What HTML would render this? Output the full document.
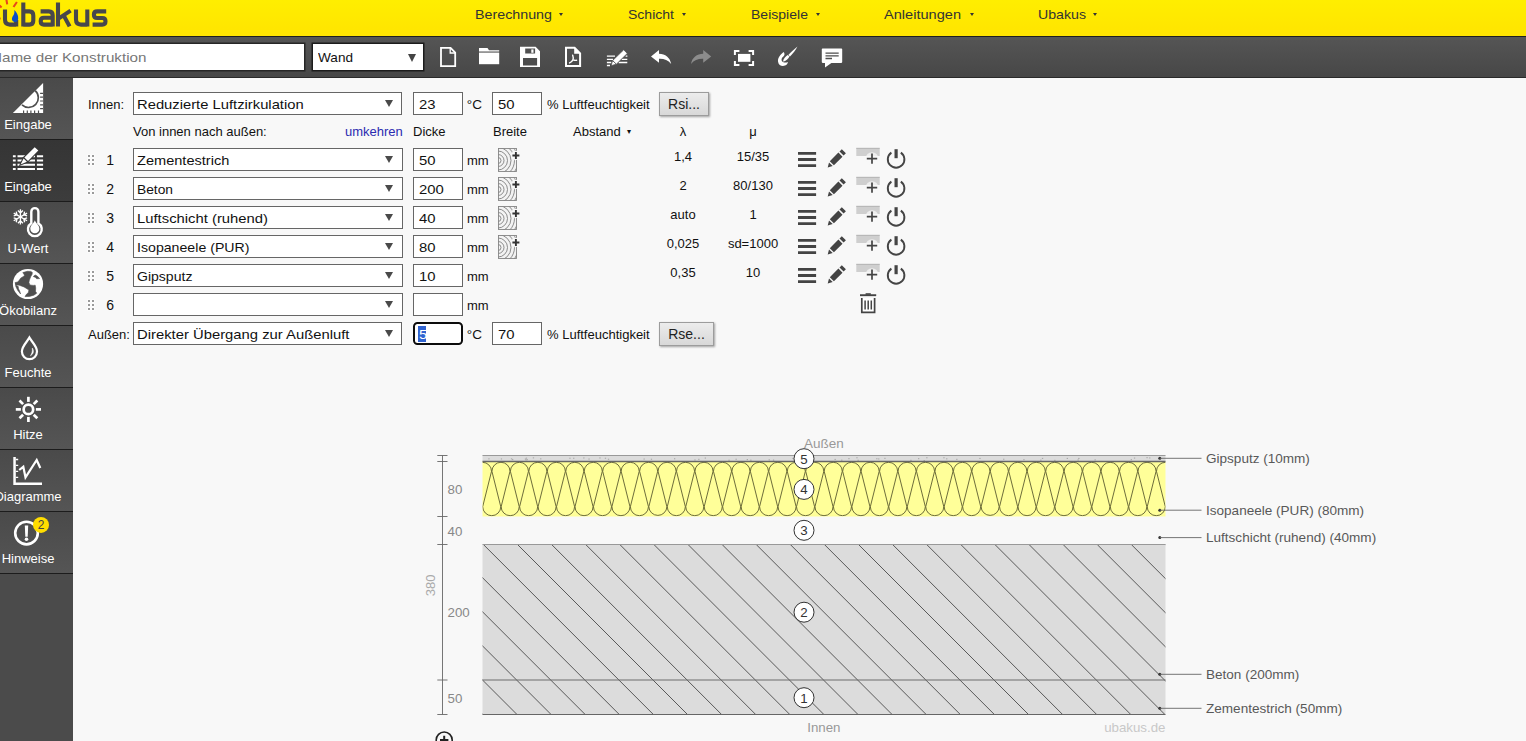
<!DOCTYPE html><html><head><meta charset="utf-8"><title>ubakus</title><style>
*{box-sizing:border-box;margin:0;padding:0}
html,body{width:1526px;height:741px;overflow:hidden;background:#f8f8f8;font-family:"Liberation Sans",sans-serif;}
.abs{position:absolute}
#hdr{position:absolute;left:0;top:0;width:1526px;height:36px;background:linear-gradient(#ffee00,#ffe400);}
#tb{position:absolute;left:0;top:36px;width:1526px;height:42px;background:linear-gradient(#555555,#474747);border-top:1px solid #1e1e1e;border-bottom:1px solid #2a2a2a;}
#sb{position:absolute;left:0;top:78px;width:73px;height:663px;background:#4b4b4b;}
.nav{position:absolute;top:6.6px;font-size:13.5px;color:#333;white-space:nowrap;line-height:16px;}
.nav i{font-style:normal;font-size:8px;position:relative;top:-2px;margin-left:5px}
.sbi{position:absolute;left:0;width:73px;height:62px;border-bottom:1px solid #1c1c1c;background:linear-gradient(#4a4a4a,#555555);}
.sbi.sel{background:linear-gradient(#353535,#3c3c3c)}
.sbl{position:absolute;left:-22px;width:100px;text-align:center;top:39px;font-size:13px;line-height:16px;color:#fff;white-space:nowrap}
.t{position:absolute;font-size:13px;line-height:15px;color:#111;white-space:nowrap}
.v{position:absolute;font-size:13px;line-height:15px;color:#222;white-space:nowrap;width:80px;text-align:center}
.sel{ }
.box{position:absolute;background:#fff;border:1px solid #555;height:23px;}
.box span{position:absolute;left:4px;top:3px;font-size:14px;line-height:16px;color:#111;white-space:nowrap}
.arr{position:absolute;width:0;height:0;border-left:4.2px solid transparent;border-right:4.2px solid transparent;border-top:7.6px solid #4a4a4a;}
.btn{position:absolute;height:23.6px;border:1px solid #9c9c9c;background:linear-gradient(#ececec,#d8d8d8);box-shadow:0.5px 1px 2px rgba(0,0,0,.35);font-size:14px;line-height:22.3px;text-align:center;color:#222;}
</style></head><body>
<div id="hdr">
<svg class="abs" style="left:0;top:0" width="112" height="36" viewBox="0 0 112 36">
<g fill="none" stroke="#47474c" stroke-width="4.1" stroke-linejoin="round">
<path d="M5,9.5 V19.6 Q5,24.6 10,24.6 H16.2 M16.2,20 V26.5"/>
<path d="M23.3,2.4 V26.5 M23.3,11.4 H29.4 Q33.3,11.4 33.3,15.6 V20.4 Q33.3,24.6 29.4,24.6 H23.3"/>
<path d="M40.6,11.4 H48.8 Q52.7,11.4 52.7,15.4 V26.5 M52.7,17.8 H44 Q40.7,17.8 40.7,21.2 Q40.7,24.6 44,24.6 H52.7"/>
<path d="M58,2.4 V26.5 M58.5,18.6 L70.6,10.6 M63.8,15.6 L69.6,26.4"/>
<path d="M76,9.5 V19.6 Q76,24.6 81,24.6 H87.3 M87.3,9.5 V26.5"/>
<path d="M106.2,11.4 H97.2 Q93.9,11.4 93.9,14.7 Q93.9,18 97.2,18 H102.2 Q105.5,18 105.5,21.3 Q105.5,24.6 102.2,24.6 H92.6"/>
</g>
<path d="M14.2,10 C16.8,12.4 18.4,15.2 18.2,18.4 C18,21.2 16.2,22.2 14.6,22 C12.6,21.8 11.6,20 12,18.2 C12.4,16 15.2,14.4 14.2,10 Z" fill="#0b4fc6"/>
<g stroke="#e8481c" stroke-width="2.1"><path d="M6.4,-0.5 L7.2,4.3 M16.9,2 L13.5,7 M-0.5,5.6 L1.6,7.5 M-0.5,18.6 L0.6,18.3"/></g>
</svg>
<div class="nav" style="left:475px;transform:scaleX(1.0575);transform-origin:0 0">Berechnung</div><div class="abs" style="left:559px;top:13.2px;width:0;height:0;border-left:2.7px solid transparent;border-right:2.7px solid transparent;border-top:3.6px solid #333"></div>
<div class="nav" style="left:628px;transform:scaleX(1.0388);transform-origin:0 0">Schicht</div><div class="abs" style="left:682px;top:13.2px;width:0;height:0;border-left:2.7px solid transparent;border-right:2.7px solid transparent;border-top:3.6px solid #333"></div>
<div class="nav" style="left:751px;transform:scaleX(1.0401);transform-origin:0 0">Beispiele</div><div class="abs" style="left:816px;top:13.2px;width:0;height:0;border-left:2.7px solid transparent;border-right:2.7px solid transparent;border-top:3.6px solid #333"></div>
<div class="nav" style="left:884px;transform:scaleX(1.0798);transform-origin:0 0">Anleitungen</div><div class="abs" style="left:969.5px;top:13.2px;width:0;height:0;border-left:2.7px solid transparent;border-right:2.7px solid transparent;border-top:3.6px solid #333"></div>
<div class="nav" style="left:1038px;transform:scaleX(1.0485);transform-origin:0 0">Ubakus</div><div class="abs" style="left:1093px;top:13.2px;width:0;height:0;border-left:2.7px solid transparent;border-right:2.7px solid transparent;border-top:3.6px solid #333"></div>
</div>
<div id="tb"></div>
<div class="abs" style="left:-6px;top:44px;width:310px;height:26px;background:#fff;box-shadow:0 0 0 1.5px #262626"><span class="abs" style="left:-3.3px;top:5.6px;font-size:13.5px;line-height:16px;transform:scaleX(1.1262);transform-origin:0 0;color:#777;white-space:nowrap">Name der Konstruktion</span></div>
<div class="abs" style="left:313px;top:44px;width:110px;height:26px;background:#fff;box-shadow:0 0 0 1.5px #1c1c1c"><span class="abs" style="left:4.5px;top:5.6px;font-size:13.5px;line-height:16px;color:#111;transform:scaleX(1.007);transform-origin:0 0">Wand</span><div class="arr" style="left:94.5px;top:9.5px;border-left-width:4.5px;border-right-width:4.5px;border-top-width:8px;border-top-color:#444"></div></div>
<div id="sb"></div>
<div class="sbi" style="top:78px"><div class="sbl">Eingabe</div></div>
<div class="sbi sel" style="top:140px"><div class="sbl">Eingabe</div></div>
<div class="sbi" style="top:202px"><div class="sbl">U-Wert</div></div>
<div class="sbi" style="top:264px"><div class="sbl">Ökobilanz</div></div>
<div class="sbi" style="top:326px"><div class="sbl">Feuchte</div></div>
<div class="sbi" style="top:388px"><div class="sbl">Hitze</div></div>
<div class="sbi" style="top:450px"><div class="sbl">Diagramme</div></div>
<div class="sbi" style="top:512px"><div class="sbl">Hinweise</div></div>
<div class="t" style="left:88px;top:96.70px;font-size:13px;color:#111;">Innen:</div>
<div class="box" style="left:133px;top:92px;width:269px;height:23px;border-color:#666"><span style="left:3.3px;top:3.82px;font-size:13.5px;transform:scaleX(1.0942);transform-origin:0 0">Reduzierte Luftzirkulation</span><div class="arr" style="left:251px;top:7.4px"></div></div>
<div class="box" style="left:413px;top:92px;width:50px;height:23px;border-color:#666"><span style="left:5px;top:4.12px;font-size:13.5px;transform:scaleX(1.1);transform-origin:0 0">23</span></div>
<div class="t" style="left:466.8px;top:96.82px;font-size:13.5px;color:#111;">°C</div>
<div class="box" style="left:492px;top:92px;width:50px;height:23px;border-color:#666"><span style="left:5px;top:4.12px;font-size:13.5px;transform:scaleX(1.1);transform-origin:0 0">50</span></div>
<div class="t" style="left:547px;top:96.70px;font-size:13px;color:#111;">% Luftfeuchtigkeit</div>
<div class="btn" style="left:659px;top:92px;width:50px">Rsi...</div>
<div class="t" style="left:133px;top:123.70px;font-size:13px;color:#111;">Von innen nach außen:</div>
<div class="t" style="left:345px;top:123.70px;font-size:13px;color:#2b2bb0;">umkehren</div>
<div class="t" style="left:413px;top:123.70px;font-size:13px;color:#111;">Dicke</div>
<div class="t" style="left:493px;top:123.70px;font-size:13px;color:#111;">Breite</div>
<div class="t" style="left:573px;top:123.70px;font-size:13px;color:#111;">Abstand <span style="font-size:8px;position:relative;top:-2px;margin-left:3px">&#9662;</span></div>
<div class="v" style="left:643px;top:123.70px;font-size:13px;color:#111;">λ</div>
<div class="v" style="left:713px;top:123.70px;font-size:13px;color:#111;">μ</div>
<svg class="abs" style="left:87.1px;top:154.1px" width="8" height="12" viewBox="0 0 8 12"><rect x="0.4" y="0.4" width="3.2" height="3.2" fill="#fff"/><rect x="1" y="1" width="2" height="2" fill="#9a9a9a"/><rect x="0.4" y="4.4" width="3.2" height="3.2" fill="#fff"/><rect x="1" y="5" width="2" height="2" fill="#9a9a9a"/><rect x="0.4" y="8.4" width="3.2" height="3.2" fill="#fff"/><rect x="1" y="9" width="2" height="2" fill="#9a9a9a"/><rect x="4.4" y="0.4" width="3.2" height="3.2" fill="#fff"/><rect x="5" y="1" width="2" height="2" fill="#9a9a9a"/><rect x="4.4" y="4.4" width="3.2" height="3.2" fill="#fff"/><rect x="5" y="5" width="2" height="2" fill="#9a9a9a"/><rect x="4.4" y="8.4" width="3.2" height="3.2" fill="#fff"/><rect x="5" y="9" width="2" height="2" fill="#9a9a9a"/></svg>
<div class="t" style="left:106.2px;top:152.65px;font-size:14px;color:#111;">1</div>
<div class="box" style="left:133px;top:148px;width:270px;height:23px;border-color:#666"><span style="left:3.3px;top:3.82px;font-size:13.5px;transform:scaleX(1.0791);transform-origin:0 0">Zementestrich</span><div class="arr" style="left:251px;top:7.4px"></div></div>
<div class="box" style="left:413px;top:148px;width:50px;height:23px;border-color:#666"><span style="left:5px;top:4.12px;font-size:13.5px;transform:scaleX(1.1);transform-origin:0 0">50</span></div>
<div class="t" style="left:467px;top:152.70px;font-size:13px;color:#111;">mm</div>
<!--WOOD 148-->
<div class="v" style="left:643px;top:149.00px;font-size:13px;color:#111;">1,4</div>
<div class="v" style="left:713px;top:149.00px;font-size:13px;color:#111;">15/35</div>
<!--ROWICONS 148-->
<svg class="abs" style="left:87.1px;top:183.1px" width="8" height="12" viewBox="0 0 8 12"><rect x="0.4" y="0.4" width="3.2" height="3.2" fill="#fff"/><rect x="1" y="1" width="2" height="2" fill="#9a9a9a"/><rect x="0.4" y="4.4" width="3.2" height="3.2" fill="#fff"/><rect x="1" y="5" width="2" height="2" fill="#9a9a9a"/><rect x="0.4" y="8.4" width="3.2" height="3.2" fill="#fff"/><rect x="1" y="9" width="2" height="2" fill="#9a9a9a"/><rect x="4.4" y="0.4" width="3.2" height="3.2" fill="#fff"/><rect x="5" y="1" width="2" height="2" fill="#9a9a9a"/><rect x="4.4" y="4.4" width="3.2" height="3.2" fill="#fff"/><rect x="5" y="5" width="2" height="2" fill="#9a9a9a"/><rect x="4.4" y="8.4" width="3.2" height="3.2" fill="#fff"/><rect x="5" y="9" width="2" height="2" fill="#9a9a9a"/></svg>
<div class="t" style="left:106.2px;top:181.65px;font-size:14px;color:#111;">2</div>
<div class="box" style="left:133px;top:177px;width:270px;height:23px;border-color:#666"><span style="left:3.3px;top:3.82px;font-size:13.5px;transform:scaleX(1.0204);transform-origin:0 0">Beton</span><div class="arr" style="left:251px;top:7.4px"></div></div>
<div class="box" style="left:413px;top:177px;width:50px;height:23px;border-color:#666"><span style="left:5px;top:4.12px;font-size:13.5px;transform:scaleX(1.1);transform-origin:0 0">200</span></div>
<div class="t" style="left:467px;top:181.70px;font-size:13px;color:#111;">mm</div>
<!--WOOD 177-->
<div class="v" style="left:643px;top:178.00px;font-size:13px;color:#111;">2</div>
<div class="v" style="left:713px;top:178.00px;font-size:13px;color:#111;">80/130</div>
<!--ROWICONS 177-->
<svg class="abs" style="left:87.1px;top:212.1px" width="8" height="12" viewBox="0 0 8 12"><rect x="0.4" y="0.4" width="3.2" height="3.2" fill="#fff"/><rect x="1" y="1" width="2" height="2" fill="#9a9a9a"/><rect x="0.4" y="4.4" width="3.2" height="3.2" fill="#fff"/><rect x="1" y="5" width="2" height="2" fill="#9a9a9a"/><rect x="0.4" y="8.4" width="3.2" height="3.2" fill="#fff"/><rect x="1" y="9" width="2" height="2" fill="#9a9a9a"/><rect x="4.4" y="0.4" width="3.2" height="3.2" fill="#fff"/><rect x="5" y="1" width="2" height="2" fill="#9a9a9a"/><rect x="4.4" y="4.4" width="3.2" height="3.2" fill="#fff"/><rect x="5" y="5" width="2" height="2" fill="#9a9a9a"/><rect x="4.4" y="8.4" width="3.2" height="3.2" fill="#fff"/><rect x="5" y="9" width="2" height="2" fill="#9a9a9a"/></svg>
<div class="t" style="left:106.2px;top:210.65px;font-size:14px;color:#111;">3</div>
<div class="box" style="left:133px;top:206px;width:270px;height:23px;border-color:#666"><span style="left:3.3px;top:3.82px;font-size:13.5px;transform:scaleX(1.0980);transform-origin:0 0">Luftschicht (ruhend)</span><div class="arr" style="left:251px;top:7.4px"></div></div>
<div class="box" style="left:413px;top:206px;width:50px;height:23px;border-color:#666"><span style="left:5px;top:4.12px;font-size:13.5px;transform:scaleX(1.1);transform-origin:0 0">40</span></div>
<div class="t" style="left:467px;top:210.70px;font-size:13px;color:#111;">mm</div>
<!--WOOD 206-->
<div class="v" style="left:643px;top:207.00px;font-size:13px;color:#111;">auto</div>
<div class="v" style="left:713px;top:207.00px;font-size:13px;color:#111;">1</div>
<!--ROWICONS 206-->
<svg class="abs" style="left:87.1px;top:241.1px" width="8" height="12" viewBox="0 0 8 12"><rect x="0.4" y="0.4" width="3.2" height="3.2" fill="#fff"/><rect x="1" y="1" width="2" height="2" fill="#9a9a9a"/><rect x="0.4" y="4.4" width="3.2" height="3.2" fill="#fff"/><rect x="1" y="5" width="2" height="2" fill="#9a9a9a"/><rect x="0.4" y="8.4" width="3.2" height="3.2" fill="#fff"/><rect x="1" y="9" width="2" height="2" fill="#9a9a9a"/><rect x="4.4" y="0.4" width="3.2" height="3.2" fill="#fff"/><rect x="5" y="1" width="2" height="2" fill="#9a9a9a"/><rect x="4.4" y="4.4" width="3.2" height="3.2" fill="#fff"/><rect x="5" y="5" width="2" height="2" fill="#9a9a9a"/><rect x="4.4" y="8.4" width="3.2" height="3.2" fill="#fff"/><rect x="5" y="9" width="2" height="2" fill="#9a9a9a"/></svg>
<div class="t" style="left:106.2px;top:239.65px;font-size:14px;color:#111;">4</div>
<div class="box" style="left:133px;top:235px;width:270px;height:23px;border-color:#666"><span style="left:3.3px;top:3.82px;font-size:13.5px;transform:scaleX(1.0483);transform-origin:0 0">Isopaneele (PUR)</span><div class="arr" style="left:251px;top:7.4px"></div></div>
<div class="box" style="left:413px;top:235px;width:50px;height:23px;border-color:#666"><span style="left:5px;top:4.12px;font-size:13.5px;transform:scaleX(1.1);transform-origin:0 0">80</span></div>
<div class="t" style="left:467px;top:239.70px;font-size:13px;color:#111;">mm</div>
<!--WOOD 235-->
<div class="v" style="left:643px;top:236.00px;font-size:13px;color:#111;">0,025</div>
<div class="v" style="left:713px;top:236.00px;font-size:13px;color:#111;">sd=1000</div>
<!--ROWICONS 235-->
<svg class="abs" style="left:87.1px;top:270.1px" width="8" height="12" viewBox="0 0 8 12"><rect x="0.4" y="0.4" width="3.2" height="3.2" fill="#fff"/><rect x="1" y="1" width="2" height="2" fill="#9a9a9a"/><rect x="0.4" y="4.4" width="3.2" height="3.2" fill="#fff"/><rect x="1" y="5" width="2" height="2" fill="#9a9a9a"/><rect x="0.4" y="8.4" width="3.2" height="3.2" fill="#fff"/><rect x="1" y="9" width="2" height="2" fill="#9a9a9a"/><rect x="4.4" y="0.4" width="3.2" height="3.2" fill="#fff"/><rect x="5" y="1" width="2" height="2" fill="#9a9a9a"/><rect x="4.4" y="4.4" width="3.2" height="3.2" fill="#fff"/><rect x="5" y="5" width="2" height="2" fill="#9a9a9a"/><rect x="4.4" y="8.4" width="3.2" height="3.2" fill="#fff"/><rect x="5" y="9" width="2" height="2" fill="#9a9a9a"/></svg>
<div class="t" style="left:106.2px;top:268.65px;font-size:14px;color:#111;">5</div>
<div class="box" style="left:133px;top:264px;width:270px;height:23px;border-color:#666"><span style="left:3.3px;top:3.82px;font-size:13.5px;transform:scaleX(1.0398);transform-origin:0 0">Gipsputz</span><div class="arr" style="left:251px;top:7.4px"></div></div>
<div class="box" style="left:413px;top:264px;width:50px;height:23px;border-color:#666"><span style="left:5px;top:4.12px;font-size:13.5px;transform:scaleX(1.1);transform-origin:0 0">10</span></div>
<div class="t" style="left:467px;top:268.70px;font-size:13px;color:#111;">mm</div>
<div class="v" style="left:643px;top:265.00px;font-size:13px;color:#111;">0,35</div>
<div class="v" style="left:713px;top:265.00px;font-size:13px;color:#111;">10</div>
<!--ROWICONS 264-->
<svg class="abs" style="left:87.1px;top:299.1px" width="8" height="12" viewBox="0 0 8 12"><rect x="0.4" y="0.4" width="3.2" height="3.2" fill="#fff"/><rect x="1" y="1" width="2" height="2" fill="#9a9a9a"/><rect x="0.4" y="4.4" width="3.2" height="3.2" fill="#fff"/><rect x="1" y="5" width="2" height="2" fill="#9a9a9a"/><rect x="0.4" y="8.4" width="3.2" height="3.2" fill="#fff"/><rect x="1" y="9" width="2" height="2" fill="#9a9a9a"/><rect x="4.4" y="0.4" width="3.2" height="3.2" fill="#fff"/><rect x="5" y="1" width="2" height="2" fill="#9a9a9a"/><rect x="4.4" y="4.4" width="3.2" height="3.2" fill="#fff"/><rect x="5" y="5" width="2" height="2" fill="#9a9a9a"/><rect x="4.4" y="8.4" width="3.2" height="3.2" fill="#fff"/><rect x="5" y="9" width="2" height="2" fill="#9a9a9a"/></svg>
<div class="t" style="left:106.2px;top:297.65px;font-size:14px;color:#111;">6</div>
<div class="box" style="left:133px;top:293px;width:270px;height:23px;border-color:#666"><span style="left:3.3px;top:3.82px;font-size:13.5px;transform:scaleX(1.0000);transform-origin:0 0"></span><div class="arr" style="left:251px;top:7.4px"></div></div>
<div class="box" style="left:413px;top:293px;width:50px;height:23px;border-color:#666"><span style="left:5px;top:4.12px;font-size:13.5px;transform:scaleX(1.1);transform-origin:0 0"></span></div>
<div class="t" style="left:467px;top:297.70px;font-size:13px;color:#111;">mm</div>
<!--TRASH 293-->
<div class="t" style="left:88px;top:326.70px;font-size:13px;color:#111;">Außen:</div>
<div class="box" style="left:133px;top:322px;width:269px;height:23px;border-color:#666"><span style="left:3.3px;top:3.82px;font-size:13.5px;transform:scaleX(1.0976);transform-origin:0 0">Direkter Übergang zur Außenluft</span><div class="arr" style="left:251px;top:7.4px"></div></div>
<div class="abs" style="left:413px;top:322px;width:50px;height:23px;background:#fff;border:2px solid #0c0c0c;border-radius:4.5px"><div class="abs" style="left:3px;top:2.2px;width:8.1px;height:15.6px;background:#3063d0"></div><span class="abs" style="left:4px;top:3.12px;font-size:13.5px;line-height:16px;color:#fff;transform:scaleX(1.1);transform-origin:0 0">5</span></div>
<div class="t" style="left:466.8px;top:326.82px;font-size:13.5px;color:#111;">°C</div>
<div class="box" style="left:492px;top:322px;width:50px;height:23px;border-color:#666"><span style="left:5px;top:4.12px;font-size:13.5px;transform:scaleX(1.1);transform-origin:0 0">70</span></div>
<div class="t" style="left:547px;top:326.70px;font-size:13px;color:#111;">% Luftfeuchtigkeit</div>
<div class="btn" style="left:659px;top:322px;width:55px">Rse...</div>
<svg class="abs" style="left:430px;top:40px" width="430" height="36" viewBox="430 40 430 36"><path d="M441,47.9 H450.6 L455.2,52.5 V66.2 H441 Z" fill="none" stroke="#fff" stroke-width="1.8"/><path d="M450.2,48 V53 H455" fill="none" stroke="#fff" stroke-width="1.3"/><path d="M479,48 H487.5 L489,50.2 H499.2 V51.6 H479 Z" fill="#fff"/><rect x="479" y="52.6" width="20.2" height="11.6" fill="#fff"/><path fill-rule="evenodd" d="M520,46.8 H535.6 L540,51.2 V67.1 H520 Z M525.2,48.4 V53.6 H535.1 V48.4 Z M523,57.9 V65.4 H537.1 V57.9 Z" fill="#fff"/><rect x="531.3" y="49.4" width="2.2" height="3.4" fill="#fff"/><path d="M566,47.8 H574.6 L580.1,53.3 V66.1 H566 Z" fill="none" stroke="#fff" stroke-width="2"/><path d="M574.2,47.6 L580.4,53.8 H574.2 Z" fill="#fff"/><path d="M572.7,55.2 C573.4,57 573.2,58.8 572.9,59.8 M572.9,59.8 C572,61.4 570.8,62.4 569.6,62.9 M572.9,59.8 C574,60.2 575.4,60.4 576.6,60.3" fill="none" stroke="#fff" stroke-width="1.4" stroke-linecap="round"/><g stroke="#fff" stroke-width="1.3"><path d="M606.9,56.2 H615 M606.9,59.3 H613 M606.9,62.5 H611.4 M606.9,65.5 H610 M625.6,56.2 H627.4 M621.6,59.3 H627.3 M618.6,62.5 H627.3"/></g><path d="M623.7,49.8 L627.3,53.4 L616.4,64.2 L611,65.7 L612.6,60.6 Z" fill="#fff" stroke="#4e4e4e" stroke-width="0.8"/><path d="M612.6,60.6 L616.4,64.2" stroke="#4e4e4e" stroke-width="0.9"/><path d="M659,50 L651,56.6 L659,62.8 V58.8 C664,58.6 668,60 671.2,64 C670,57.4 665.4,54 659,53.8 Z" fill="#fff"/><g transform="translate(1362.2,0) scale(-1,1)"><path d="M659,50 L651,56.6 L659,62.8 V58.8 C664,58.6 668,60 671.2,64 C670,57.4 665.4,54 659,53.8 Z" fill="#8c8c8c"/></g><path d="M734.9,55 V51.1 H739.4 M748.6,51.1 H753.1 V55 M753.1,61 V64.9 H748.6 M739.4,64.9 H734.9 V61" fill="none" stroke="#fff" stroke-width="2"/><rect x="738" y="53.9" width="12.4" height="7.9" fill="#fff"/><path d="M797.5,46.5 C794.6,48.6 790.4,52.6 788.3,55 L790,56.5 C792.6,53.8 796,49.6 797.5,46.5 Z" fill="#fff"/><path d="M789.5,56.6 L787.7,55 C785.6,56.4 783.3,58.8 783,61.4 C785.6,61.6 788.2,59.2 789.5,56.6 Z" fill="#fff"/><path d="M783.8,52 C781,54 777.6,57.6 778,61.4 C778.4,65.2 782,66.8 785,65.6 C786.8,64.8 787.9,63.4 787.9,62 C786,62.8 783.2,62.8 782,61.2 C781,59.6 781.6,57.6 783.4,56.4 C784.8,55.4 784.8,53.6 783.8,52 Z" fill="#fff"/><path d="M822.6,48.5 H841.4 Q842.2,48.5 842.2,49.3 V62.1 Q842.2,62.9 841.4,62.9 H831.4 L825,67.4 V62.9 H822.6 Q821.8,62.9 821.8,62.1 V49.3 Q821.8,48.5 822.6,48.5 Z" fill="#fff"/><path d="M825.5,53.1 H838.7 M825.5,55.8 H838.7 M825.5,58.5 H832" stroke="#4e4e4e" stroke-width="1.3"/></svg>
<svg class="abs" style="left:0;top:78px" width="73" height="500" viewBox="0 78 73 500"><path d="M12.9,113.1 H43.1 V82.9 Z" fill="#fff"/><path d="M35.2,90.6 A9.7,9.7 0 0 1 22,104.9" fill="none" stroke="#4f4f4f" stroke-width="1.7"/><path d="M23.6,110.4 V113.1 M27.3,110.4 V113.1 M30.9,110.4 V113.1 M34.6,110.4 V113.1 M38.5,110.4 V113.1 M40.1,93.4 H43.1 M40.1,97.2 H43.1 M40.1,101 H43.1 M40.1,104.8 H43.1 M40.1,108.6 H43.1 " stroke="#4f4f4f" stroke-width="1.2"/><path d="M12.9,156.3 H15.7 M17.5,156.3 H35 M36.9,156.3 H43.1 M12.9,160.5 H15.7 M17.5,160.5 H35 M36.9,160.5 H43.1 M12.9,164.75 H15.7 M17.5,164.75 H35 M36.9,164.75 H43.1 M12.9,169 H15.7 M17.5,169 H35 M36.9,169 H43.1 " stroke="#fff" stroke-width="2.1"/><path d="M34.7,145.8 L39.7,150.6 L28,162.4 L18.8,166.2 L22.9,157.2 Z" fill="#383838"/><path d="M34.7,147.2 L38.3,150.6 L28,161 L24.4,157.5 Z M23.6,158.5 L26.9,161.8 L20.6,164.4 Z" fill="#fff"/><g stroke="#fff" stroke-width="1.35" fill="none"><g transform="rotate(0 20.4 216.9)"><path d="M20.4,216.9 V209.2 M20.4,213 L17.9,210.6 M20.4,213 L22.9,210.6" /></g><g transform="rotate(60 20.4 216.9)"><path d="M20.4,216.9 V209.2 M20.4,213 L17.9,210.6 M20.4,213 L22.9,210.6" /></g><g transform="rotate(120 20.4 216.9)"><path d="M20.4,216.9 V209.2 M20.4,213 L17.9,210.6 M20.4,213 L22.9,210.6" /></g><g transform="rotate(180 20.4 216.9)"><path d="M20.4,216.9 V209.2 M20.4,213 L17.9,210.6 M20.4,213 L22.9,210.6" /></g><g transform="rotate(240 20.4 216.9)"><path d="M20.4,216.9 V209.2 M20.4,213 L17.9,210.6 M20.4,213 L22.9,210.6" /></g><g transform="rotate(300 20.4 216.9)"><path d="M20.4,216.9 V209.2 M20.4,213 L17.9,210.6 M20.4,213 L22.9,210.6" /></g></g><path d="M31.3,223.3 V211.7 A3.55,3.55 0 0 1 38.4,211.7 V223.3 A6.9,6.9 0 1 1 31.3,223.3 Z" fill="none" stroke="#fff" stroke-width="2.4"/><path d="M34.85,220.2 C35.6,223 39.4,225 39.4,228.8 A4.55,4.55 0 0 1 30.3,228.8 C30.3,225 34.1,223 34.85,220.2 Z" fill="#fff"/><circle cx="28" cy="284" r="15.1" fill="#fff"/><path d="M22.8,272.6 L27.4,271.3 L30.8,271.4 L32.3,272.4 L32.1,274.3 L30.8,276.5 L29.4,280.1 L28.9,282.5 L29.9,285.0 L33.3,285.4 L35.2,285.2 L35.7,287.9 L35.5,291.3 L36.7,293.2 L33.8,295.2 L29.4,296.4 L25.0,296.6 L26.5,294.2 L28.4,292.5 L28.9,290.1 L27.0,288.8 L24.0,286.9 L20.6,285.7 L19.2,285.2 L15.8,284.7 L15.3,282.5 L17.7,282.0 L19.4,280.1 L20.6,278.2 L22.6,276.9 L24.5,275.7 L24.0,274.3 Z M15.3,282.8 L15.8,286.4 L17.7,290.3 L20.6,294.0 L19.7,291.3 L18.5,288.8 L18.2,286.4 L16.5,285.4 Z M33.3,276.5 L35.2,275.0 L37.2,276.0 L39.6,278.6 L36.7,278.7 L35.2,277.3 Z" fill="#4f4f4f" stroke="#4f4f4f" stroke-width="0.6" stroke-linejoin="round"/><path d="M29.4,337.6 C31.4,341.6 37,346 37,351.6 A7.55,7.55 0 0 1 21.9,351.6 C21.9,346 27.4,341.6 29.4,337.6 Z" fill="none" stroke="#fff" stroke-width="2.2" stroke-miterlimit="10"/><path d="M32.3,348 C34.4,351 33.4,354.4 30.4,355.7 C32,353.6 32.6,351 32.3,348 Z" fill="#fff" stroke="#fff" stroke-width="0.5"/><circle cx="28.4" cy="409.4" r="4.75" fill="none" stroke="#fff" stroke-width="2.7"/><g stroke="#fff" stroke-width="2.7"><path transform="rotate(0 28.4 409.4)" d="M28.4,401.9 V396.8"/><path transform="rotate(45 28.4 409.4)" d="M28.4,401.9 V396.8"/><path transform="rotate(90 28.4 409.4)" d="M28.4,401.9 V396.8"/><path transform="rotate(135 28.4 409.4)" d="M28.4,401.9 V396.8"/><path transform="rotate(180 28.4 409.4)" d="M28.4,401.9 V396.8"/><path transform="rotate(225 28.4 409.4)" d="M28.4,401.9 V396.8"/><path transform="rotate(270 28.4 409.4)" d="M28.4,401.9 V396.8"/><path transform="rotate(315 28.4 409.4)" d="M28.4,401.9 V396.8"/></g><path d="M14.55,456.9 V483.75 H42" fill="none" stroke="#fff" stroke-width="2.5"/><path d="M15.8,459.5 H18.2 M15.8,465.4 H18.2 M15.8,471.4 H18.2 M15.8,477.4 H18.2" stroke="#fff" stroke-width="1.4"/><path d="M19.2,470 L23.3,466.8 L25.5,477.3 L36.7,460 L40.3,468" fill="none" stroke="#fff" stroke-width="2.2" stroke-linejoin="miter"/><circle cx="26.5" cy="533.05" r="11.3" fill="none" stroke="#fff" stroke-width="2.6"/><path d="M24.8,525.4 H28.2 L27.7,536.8 H25.3 Z" fill="#fff"/><circle cx="26.5" cy="539.3" r="1.8" fill="#fff"/><circle cx="41" cy="524.9" r="8" fill="#ffdd00"/><text x="41.2" y="528.9" font-size="12" fill="#444" text-anchor="middle" font-family="Liberation Sans, sans-serif">2</text></svg>
<svg class="abs" style="left:490px;top:140px" width="430" height="180" viewBox="490 140 430 180"><g transform="translate(0,0)"><path d="M798,153.4 H816.1 M798,159.5 H816.1 M798,165.6 H816.1" stroke="#444" stroke-width="2.9"/><path d="M841.8,149.2 L845.9,153.3 L843.6,155.6 L839.5,151.5 Z M838.4,152.6 L842.5,156.7 L833.9,165.3 L829.8,161.2 Z M829,162.4 L832.7,166.1 L827.7,167.4 Z" fill="#444"/><rect x="856.3" y="148" width="23.4" height="8" fill="#cfcfcf"/><path d="M856.3,148.3 H879.7" stroke="#aaa" stroke-width="0.8"/><circle cx="872" cy="158.6" r="6.4" fill="#f8f8f8" opacity="0.75"/><path d="M866.8,158.6 H877.2 M872,153.4 V163.8" stroke="#444" stroke-width="1.7"/><path d="M891.4,152.6 A8.3,8.3 0 1 0 900.8,152.6" fill="none" stroke="#444" stroke-width="1.9"/><path d="M896.1,149.2 V158.2" stroke="#444" stroke-width="3.2"/></g><g transform="translate(0,29)"><path d="M798,153.4 H816.1 M798,159.5 H816.1 M798,165.6 H816.1" stroke="#444" stroke-width="2.9"/><path d="M841.8,149.2 L845.9,153.3 L843.6,155.6 L839.5,151.5 Z M838.4,152.6 L842.5,156.7 L833.9,165.3 L829.8,161.2 Z M829,162.4 L832.7,166.1 L827.7,167.4 Z" fill="#444"/><rect x="856.3" y="148" width="23.4" height="8" fill="#cfcfcf"/><path d="M856.3,148.3 H879.7" stroke="#aaa" stroke-width="0.8"/><circle cx="872" cy="158.6" r="6.4" fill="#f8f8f8" opacity="0.75"/><path d="M866.8,158.6 H877.2 M872,153.4 V163.8" stroke="#444" stroke-width="1.7"/><path d="M891.4,152.6 A8.3,8.3 0 1 0 900.8,152.6" fill="none" stroke="#444" stroke-width="1.9"/><path d="M896.1,149.2 V158.2" stroke="#444" stroke-width="3.2"/></g><g transform="translate(0,58)"><path d="M798,153.4 H816.1 M798,159.5 H816.1 M798,165.6 H816.1" stroke="#444" stroke-width="2.9"/><path d="M841.8,149.2 L845.9,153.3 L843.6,155.6 L839.5,151.5 Z M838.4,152.6 L842.5,156.7 L833.9,165.3 L829.8,161.2 Z M829,162.4 L832.7,166.1 L827.7,167.4 Z" fill="#444"/><rect x="856.3" y="148" width="23.4" height="8" fill="#cfcfcf"/><path d="M856.3,148.3 H879.7" stroke="#aaa" stroke-width="0.8"/><circle cx="872" cy="158.6" r="6.4" fill="#f8f8f8" opacity="0.75"/><path d="M866.8,158.6 H877.2 M872,153.4 V163.8" stroke="#444" stroke-width="1.7"/><path d="M891.4,152.6 A8.3,8.3 0 1 0 900.8,152.6" fill="none" stroke="#444" stroke-width="1.9"/><path d="M896.1,149.2 V158.2" stroke="#444" stroke-width="3.2"/></g><g transform="translate(0,87)"><path d="M798,153.4 H816.1 M798,159.5 H816.1 M798,165.6 H816.1" stroke="#444" stroke-width="2.9"/><path d="M841.8,149.2 L845.9,153.3 L843.6,155.6 L839.5,151.5 Z M838.4,152.6 L842.5,156.7 L833.9,165.3 L829.8,161.2 Z M829,162.4 L832.7,166.1 L827.7,167.4 Z" fill="#444"/><rect x="856.3" y="148" width="23.4" height="8" fill="#cfcfcf"/><path d="M856.3,148.3 H879.7" stroke="#aaa" stroke-width="0.8"/><circle cx="872" cy="158.6" r="6.4" fill="#f8f8f8" opacity="0.75"/><path d="M866.8,158.6 H877.2 M872,153.4 V163.8" stroke="#444" stroke-width="1.7"/><path d="M891.4,152.6 A8.3,8.3 0 1 0 900.8,152.6" fill="none" stroke="#444" stroke-width="1.9"/><path d="M896.1,149.2 V158.2" stroke="#444" stroke-width="3.2"/></g><g transform="translate(0,116)"><path d="M798,153.4 H816.1 M798,159.5 H816.1 M798,165.6 H816.1" stroke="#444" stroke-width="2.9"/><path d="M841.8,149.2 L845.9,153.3 L843.6,155.6 L839.5,151.5 Z M838.4,152.6 L842.5,156.7 L833.9,165.3 L829.8,161.2 Z M829,162.4 L832.7,166.1 L827.7,167.4 Z" fill="#444"/><rect x="856.3" y="148" width="23.4" height="8" fill="#cfcfcf"/><path d="M856.3,148.3 H879.7" stroke="#aaa" stroke-width="0.8"/><circle cx="872" cy="158.6" r="6.4" fill="#f8f8f8" opacity="0.75"/><path d="M866.8,158.6 H877.2 M872,153.4 V163.8" stroke="#444" stroke-width="1.7"/><path d="M891.4,152.6 A8.3,8.3 0 1 0 900.8,152.6" fill="none" stroke="#444" stroke-width="1.9"/><path d="M896.1,149.2 V158.2" stroke="#444" stroke-width="3.2"/></g><g transform="translate(0,0)"><rect x="498.5" y="148.5" width="18" height="23" fill="#f3f3f3" stroke="#858585" stroke-width="0.9"/><clipPath id="wc0"><rect x="498.5" y="148.5" width="18" height="23"/></clipPath><g clip-path="url(#wc0)" fill="none" stroke="#808080" stroke-width="0.9"><circle cx="498" cy="160.5" r="3"/><circle cx="498" cy="160.5" r="6"/><circle cx="498" cy="160.5" r="9.5"/><circle cx="498" cy="160.5" r="13"/><circle cx="498" cy="160.5" r="16.5"/><circle cx="498" cy="160.5" r="20"/></g><circle cx="515.8" cy="155.4" r="4.7" fill="#f8f8f8"/><path d="M512.4,155.5 H519.4 M515.9,152 V159" stroke="#333" stroke-width="1.9"/></g><g transform="translate(0,29)"><rect x="498.5" y="148.5" width="18" height="23" fill="#f3f3f3" stroke="#858585" stroke-width="0.9"/><clipPath id="wc1"><rect x="498.5" y="148.5" width="18" height="23"/></clipPath><g clip-path="url(#wc1)" fill="none" stroke="#808080" stroke-width="0.9"><circle cx="498" cy="160.5" r="3"/><circle cx="498" cy="160.5" r="6"/><circle cx="498" cy="160.5" r="9.5"/><circle cx="498" cy="160.5" r="13"/><circle cx="498" cy="160.5" r="16.5"/><circle cx="498" cy="160.5" r="20"/></g><circle cx="515.8" cy="155.4" r="4.7" fill="#f8f8f8"/><path d="M512.4,155.5 H519.4 M515.9,152 V159" stroke="#333" stroke-width="1.9"/></g><g transform="translate(0,58)"><rect x="498.5" y="148.5" width="18" height="23" fill="#f3f3f3" stroke="#858585" stroke-width="0.9"/><clipPath id="wc2"><rect x="498.5" y="148.5" width="18" height="23"/></clipPath><g clip-path="url(#wc2)" fill="none" stroke="#808080" stroke-width="0.9"><circle cx="498" cy="160.5" r="3"/><circle cx="498" cy="160.5" r="6"/><circle cx="498" cy="160.5" r="9.5"/><circle cx="498" cy="160.5" r="13"/><circle cx="498" cy="160.5" r="16.5"/><circle cx="498" cy="160.5" r="20"/></g><circle cx="515.8" cy="155.4" r="4.7" fill="#f8f8f8"/><path d="M512.4,155.5 H519.4 M515.9,152 V159" stroke="#333" stroke-width="1.9"/></g><g transform="translate(0,87)"><rect x="498.5" y="148.5" width="18" height="23" fill="#f3f3f3" stroke="#858585" stroke-width="0.9"/><clipPath id="wc3"><rect x="498.5" y="148.5" width="18" height="23"/></clipPath><g clip-path="url(#wc3)" fill="none" stroke="#808080" stroke-width="0.9"><circle cx="498" cy="160.5" r="3"/><circle cx="498" cy="160.5" r="6"/><circle cx="498" cy="160.5" r="9.5"/><circle cx="498" cy="160.5" r="13"/><circle cx="498" cy="160.5" r="16.5"/><circle cx="498" cy="160.5" r="20"/></g><circle cx="515.8" cy="155.4" r="4.7" fill="#f8f8f8"/><path d="M512.4,155.5 H519.4 M515.9,152 V159" stroke="#333" stroke-width="1.9"/></g><rect x="861.8" y="298" width="12.8" height="14.4" fill="#fff"/><path d="M861.8,298 V312.4 H874.6 V298" fill="none" stroke="#444" stroke-width="1.7"/><path d="M860,295.2 H876.2" stroke="#444" stroke-width="1.9"/><path d="M865.6,294 H870.8" stroke="#444" stroke-width="1.6"/><path d="M865.1,300.4 V309.6 M868.2,300.4 V309.6 M871.3,300.4 V309.6" stroke="#444" stroke-width="1.5"/></svg>
<svg class="abs" style="left:0;top:420px" width="1526" height="321" viewBox="0 420 1526 321" font-family="Liberation Sans, sans-serif"><rect x="482.5" y="455.5" width="683.0" height="6.0" fill="#dcdcdc"/><rect x="482.5" y="461.5" width="683.0" height="55.0" fill="#ffff99"/><rect x="482.5" y="544.5" width="683.0" height="170.0" fill="#dcdcdc"/><g fill="#aaa"><rect x="704.7" y="457.5" width="1.3" height="1.1"/><rect x="926.2" y="457.2" width="1.3" height="1.1"/><rect x="848.3" y="458.1" width="1.3" height="1.1"/><rect x="524.8" y="458.5" width="1.3" height="1.1"/><rect x="510.9" y="458.3" width="1.3" height="1.1"/><rect x="532.8" y="457.3" width="1.3" height="1.1"/><rect x="772.9" y="459.5" width="1.3" height="1.1"/><rect x="569.3" y="457.7" width="1.3" height="1.1"/><rect x="910.3" y="459.8" width="1.3" height="1.1"/><rect x="876.2" y="458.2" width="1.3" height="1.1"/><rect x="1146.4" y="457.1" width="1.3" height="1.1"/><rect x="1066.7" y="457.9" width="1.3" height="1.1"/><rect x="583.2" y="457.4" width="1.3" height="1.1"/><rect x="694.3" y="459.4" width="1.3" height="1.1"/><rect x="607.9" y="458.7" width="1.3" height="1.1"/><rect x="918.0" y="458.1" width="1.3" height="1.1"/><rect x="856.3" y="457.2" width="1.3" height="1.1"/><rect x="525.8" y="457.6" width="1.3" height="1.1"/><rect x="946.1" y="458.3" width="1.3" height="1.1"/><rect x="698.2" y="458.8" width="1.3" height="1.1"/><rect x="792.3" y="457.9" width="1.3" height="1.1"/><rect x="1023.3" y="459.1" width="1.3" height="1.1"/><rect x="650.8" y="458.7" width="1.3" height="1.1"/><rect x="841.1" y="459.6" width="1.3" height="1.1"/><rect x="979.3" y="457.9" width="1.3" height="1.1"/><rect x="1149.1" y="457.4" width="1.3" height="1.1"/><rect x="768.6" y="459.3" width="1.3" height="1.1"/><rect x="588.4" y="458.5" width="1.3" height="1.1"/><rect x="512.0" y="459.0" width="1.3" height="1.1"/><rect x="1003.1" y="458.7" width="1.3" height="1.1"/><rect x="1078.2" y="457.9" width="1.3" height="1.1"/><rect x="956.2" y="458.8" width="1.3" height="1.1"/><rect x="878.1" y="458.4" width="1.3" height="1.1"/><rect x="1054.2" y="459.8" width="1.3" height="1.1"/><rect x="806.5" y="459.0" width="1.3" height="1.1"/><rect x="526.6" y="459.1" width="1.3" height="1.1"/><rect x="923.6" y="460.0" width="1.3" height="1.1"/><rect x="1041.9" y="457.9" width="1.3" height="1.1"/><rect x="746.7" y="459.0" width="1.3" height="1.1"/><rect x="500.8" y="458.4" width="1.3" height="1.1"/><rect x="599.3" y="457.4" width="1.3" height="1.1"/><rect x="525.4" y="459.3" width="1.3" height="1.1"/><rect x="573.1" y="457.7" width="1.3" height="1.1"/><rect x="750.2" y="459.6" width="1.3" height="1.1"/><rect x="540.1" y="458.3" width="1.3" height="1.1"/><rect x="857.5" y="459.7" width="1.3" height="1.1"/><rect x="1040.2" y="459.6" width="1.3" height="1.1"/><rect x="674.0" y="458.2" width="1.3" height="1.1"/><rect x="728.4" y="459.7" width="1.3" height="1.1"/><rect x="1133.9" y="457.5" width="1.3" height="1.1"/><rect x="604.8" y="457.7" width="1.3" height="1.1"/><rect x="643.5" y="458.5" width="1.3" height="1.1"/><rect x="884.3" y="457.8" width="1.3" height="1.1"/><rect x="488.3" y="458.3" width="1.3" height="1.1"/><rect x="735.5" y="458.7" width="1.3" height="1.1"/><rect x="1130.7" y="459.1" width="1.3" height="1.1"/><rect x="834.5" y="458.9" width="1.3" height="1.1"/><rect x="943.3" y="457.2" width="1.3" height="1.1"/><rect x="1094.5" y="459.3" width="1.3" height="1.1"/><rect x="1077.5" y="459.4" width="1.3" height="1.1"/></g><clipPath id="cc"><rect x="482.5" y="544.5" width="683.0" height="170.0"/></clipPath><path d="M142.40,544.5 l170.00,170.00 M176.50,544.5 l170.00,170.00 M210.60,544.5 l170.00,170.00 M244.70,544.5 l170.00,170.00 M278.80,544.5 l170.00,170.00 M312.90,544.5 l170.00,170.00 M347.00,544.5 l170.00,170.00 M381.10,544.5 l170.00,170.00 M415.20,544.5 l170.00,170.00 M449.30,544.5 l170.00,170.00 M483.40,544.5 l170.00,170.00 M517.50,544.5 l170.00,170.00 M551.60,544.5 l170.00,170.00 M585.70,544.5 l170.00,170.00 M619.80,544.5 l170.00,170.00 M653.90,544.5 l170.00,170.00 M688.00,544.5 l170.00,170.00 M722.10,544.5 l170.00,170.00 M756.20,544.5 l170.00,170.00 M790.30,544.5 l170.00,170.00 M824.40,544.5 l170.00,170.00 M858.50,544.5 l170.00,170.00 M892.60,544.5 l170.00,170.00 M926.70,544.5 l170.00,170.00 M960.80,544.5 l170.00,170.00 M994.90,544.5 l170.00,170.00 M1029.00,544.5 l170.00,170.00 M1063.10,544.5 l170.00,170.00 M1097.20,544.5 l170.00,170.00 M1131.30,544.5 l170.00,170.00 M1165.40,544.5 l170.00,170.00 " stroke="#4a4a4a" stroke-width="0.9" fill="none" clip-path="url(#cc)"/><clipPath id="ci"><rect x="482.5" y="461.5" width="683.0" height="55.0"/></clipPath><path d="M482.50,462.30 A9.03,9.03 0 0 1 491.53,471.33 L482.70,506.67 A9.03,9.03 0 0 0 500.76,506.67 L491.93,471.33 A9.03,9.03 0 0 1 500.96,462.30 A9.03,9.03 0 0 1 509.99,471.33 L501.16,506.67 A9.03,9.03 0 0 0 519.22,506.67 L510.39,471.33 A9.03,9.03 0 0 1 519.42,462.30 A9.03,9.03 0 0 1 528.45,471.33 L519.62,506.67 A9.03,9.03 0 0 0 537.68,506.67 L528.85,471.33 A9.03,9.03 0 0 1 537.88,462.30 A9.03,9.03 0 0 1 546.91,471.33 L538.08,506.67 A9.03,9.03 0 0 0 556.14,506.67 L547.31,471.33 A9.03,9.03 0 0 1 556.34,462.30 A9.03,9.03 0 0 1 565.37,471.33 L556.54,506.67 A9.03,9.03 0 0 0 574.60,506.67 L565.77,471.33 A9.03,9.03 0 0 1 574.80,462.30 A9.03,9.03 0 0 1 583.83,471.33 L575.00,506.67 A9.03,9.03 0 0 0 593.06,506.67 L584.23,471.33 A9.03,9.03 0 0 1 593.26,462.30 A9.03,9.03 0 0 1 602.29,471.33 L593.46,506.67 A9.03,9.03 0 0 0 611.52,506.67 L602.69,471.33 A9.03,9.03 0 0 1 611.72,462.30 A9.03,9.03 0 0 1 620.75,471.33 L611.92,506.67 A9.03,9.03 0 0 0 629.98,506.67 L621.15,471.33 A9.03,9.03 0 0 1 630.18,462.30 A9.03,9.03 0 0 1 639.21,471.33 L630.38,506.67 A9.03,9.03 0 0 0 648.44,506.67 L639.61,471.33 A9.03,9.03 0 0 1 648.64,462.30 A9.03,9.03 0 0 1 657.66,471.33 L648.84,506.67 A9.03,9.03 0 0 0 666.89,506.67 L658.06,471.33 A9.03,9.03 0 0 1 667.09,462.30 A9.03,9.03 0 0 1 676.12,471.33 L667.29,506.67 A9.03,9.03 0 0 0 685.35,506.67 L676.52,471.33 A9.03,9.03 0 0 1 685.55,462.30 A9.03,9.03 0 0 1 694.58,471.33 L685.75,506.67 A9.03,9.03 0 0 0 703.81,506.67 L694.98,471.33 A9.03,9.03 0 0 1 704.01,462.30 A9.03,9.03 0 0 1 713.04,471.33 L704.21,506.67 A9.03,9.03 0 0 0 722.27,506.67 L713.44,471.33 A9.03,9.03 0 0 1 722.47,462.30 A9.03,9.03 0 0 1 731.50,471.33 L722.67,506.67 A9.03,9.03 0 0 0 740.73,506.67 L731.90,471.33 A9.03,9.03 0 0 1 740.93,462.30 A9.03,9.03 0 0 1 749.96,471.33 L741.13,506.67 A9.03,9.03 0 0 0 759.19,506.67 L750.36,471.33 A9.03,9.03 0 0 1 759.39,462.30 A9.03,9.03 0 0 1 768.42,471.33 L759.59,506.67 A9.03,9.03 0 0 0 777.65,506.67 L768.82,471.33 A9.03,9.03 0 0 1 777.85,462.30 A9.03,9.03 0 0 1 786.88,471.33 L778.05,506.67 A9.03,9.03 0 0 0 796.11,506.67 L787.28,471.33 A9.03,9.03 0 0 1 796.31,462.30 A9.03,9.03 0 0 1 805.34,471.33 L796.51,506.67 A9.03,9.03 0 0 0 814.57,506.67 L805.74,471.33 A9.03,9.03 0 0 1 814.77,462.30 A9.03,9.03 0 0 1 823.80,471.33 L814.97,506.67 A9.03,9.03 0 0 0 833.03,506.67 L824.20,471.33 A9.03,9.03 0 0 1 833.23,462.30 A9.03,9.03 0 0 1 842.26,471.33 L833.43,506.67 A9.03,9.03 0 0 0 851.49,506.67 L842.66,471.33 A9.03,9.03 0 0 1 851.69,462.30 A9.03,9.03 0 0 1 860.72,471.33 L851.89,506.67 A9.03,9.03 0 0 0 869.95,506.67 L861.12,471.33 A9.03,9.03 0 0 1 870.15,462.30 A9.03,9.03 0 0 1 879.18,471.33 L870.35,506.67 A9.03,9.03 0 0 0 888.41,506.67 L879.58,471.33 A9.03,9.03 0 0 1 888.61,462.30 A9.03,9.03 0 0 1 897.64,471.33 L888.81,506.67 A9.03,9.03 0 0 0 906.87,506.67 L898.04,471.33 A9.03,9.03 0 0 1 907.07,462.30 A9.03,9.03 0 0 1 916.10,471.33 L907.27,506.67 A9.03,9.03 0 0 0 925.33,506.67 L916.50,471.33 A9.03,9.03 0 0 1 925.53,462.30 A9.03,9.03 0 0 1 934.56,471.33 L925.73,506.67 A9.03,9.03 0 0 0 943.79,506.67 L934.96,471.33 A9.03,9.03 0 0 1 943.99,462.30 A9.03,9.03 0 0 1 953.02,471.33 L944.19,506.67 A9.03,9.03 0 0 0 962.25,506.67 L953.42,471.33 A9.03,9.03 0 0 1 962.45,462.30 A9.03,9.03 0 0 1 971.48,471.33 L962.65,506.67 A9.03,9.03 0 0 0 980.71,506.67 L971.88,471.33 A9.03,9.03 0 0 1 980.91,462.30 A9.03,9.03 0 0 1 989.94,471.33 L981.11,506.67 A9.03,9.03 0 0 0 999.16,506.67 L990.34,471.33 A9.03,9.03 0 0 1 999.36,462.30 A9.03,9.03 0 0 1 1008.39,471.33 L999.56,506.67 A9.03,9.03 0 0 0 1017.62,506.67 L1008.79,471.33 A9.03,9.03 0 0 1 1017.82,462.30 A9.03,9.03 0 0 1 1026.85,471.33 L1018.02,506.67 A9.03,9.03 0 0 0 1036.08,506.67 L1027.25,471.33 A9.03,9.03 0 0 1 1036.28,462.30 A9.03,9.03 0 0 1 1045.31,471.33 L1036.48,506.67 A9.03,9.03 0 0 0 1054.54,506.67 L1045.71,471.33 A9.03,9.03 0 0 1 1054.74,462.30 A9.03,9.03 0 0 1 1063.77,471.33 L1054.94,506.67 A9.03,9.03 0 0 0 1073.00,506.67 L1064.17,471.33 A9.03,9.03 0 0 1 1073.20,462.30 A9.03,9.03 0 0 1 1082.23,471.33 L1073.40,506.67 A9.03,9.03 0 0 0 1091.46,506.67 L1082.63,471.33 A9.03,9.03 0 0 1 1091.66,462.30 A9.03,9.03 0 0 1 1100.69,471.33 L1091.86,506.67 A9.03,9.03 0 0 0 1109.92,506.67 L1101.09,471.33 A9.03,9.03 0 0 1 1110.12,462.30 A9.03,9.03 0 0 1 1119.15,471.33 L1110.32,506.67 A9.03,9.03 0 0 0 1128.38,506.67 L1119.55,471.33 A9.03,9.03 0 0 1 1128.58,462.30 A9.03,9.03 0 0 1 1137.61,471.33 L1128.78,506.67 A9.03,9.03 0 0 0 1146.84,506.67 L1138.01,471.33 A9.03,9.03 0 0 1 1147.04,462.30 A9.03,9.03 0 0 1 1156.07,471.33 L1147.24,506.67 A9.03,9.03 0 0 0 1165.30,506.67 L1156.47,471.33 A9.03,9.03 0 0 1 1165.50,462.30 " stroke="#5c5c30" stroke-width="0.9" fill="none" clip-path="url(#ci)"/><path d="M482.5,455.5 H1165.5" stroke="#999" stroke-width="1.1"/><path d="M482.5,461.5 H1165.5" stroke="#666" stroke-width="1.3"/><path d="M482.5,544.5 H1165.5" stroke="#999" stroke-width="1"/><path d="M482.5,680.0 H1165.5" stroke="#6c6c6c" stroke-width="1.15"/><path d="M482.5,714.5 H1165.5" stroke="#666" stroke-width="1.2"/><path d="M442.5,455.5 V714.5 M437.3,455.5 H447.5 M437.3,461.5 H447.5 M437.3,516.5 H447.5 M437.3,544.5 H447.5 M437.3,680.0 H447.5 M437.3,714.5 H447.5 " stroke="#666" stroke-width="0.9" fill="none"/><text x="447.5" y="493.8" font-size="13.3" fill="#888">80</text><text x="447.5" y="535.8" font-size="13.3" fill="#888">40</text><text x="447.5" y="617.4" font-size="13.3" fill="#888">200</text><text x="447.5" y="702.8" font-size="13.3" fill="#888">50</text><text transform="translate(435.4,585.4) rotate(-90)" text-anchor="middle" font-size="13" fill="#aaa">380</text><text x="804" y="448" font-size="13.5" fill="#999">Außen</text><text x="807.2" y="731.5" font-size="13.3" fill="#999">Innen</text><text x="1165.5" y="731.5" font-size="13.3" fill="#c8c8c8" text-anchor="end">ubakus.de</text><circle cx="804" cy="458.7" r="10" fill="#fff" stroke="#333" stroke-width="1"/><text x="804" y="463.59999999999997" font-size="13.3" fill="#333" text-anchor="middle">5</text><circle cx="804" cy="489.4" r="10" fill="#fff" stroke="#333" stroke-width="1"/><text x="804" y="494.29999999999995" font-size="13.3" fill="#333" text-anchor="middle">4</text><circle cx="804" cy="530.3" r="10" fill="#fff" stroke="#333" stroke-width="1"/><text x="804" y="535.1999999999999" font-size="13.3" fill="#333" text-anchor="middle">3</text><circle cx="804" cy="612.2" r="10" fill="#fff" stroke="#333" stroke-width="1"/><text x="804" y="617.1" font-size="13.3" fill="#333" text-anchor="middle">2</text><circle cx="804" cy="697.7" r="10" fill="#fff" stroke="#333" stroke-width="1"/><text x="804" y="702.6" font-size="13.3" fill="#333" text-anchor="middle">1</text><circle cx="1159.8" cy="458.3" r="1.5" fill="#333"/><path d="M1159.8,458.3 H1201.5" stroke="#666" stroke-width="0.9"/><text x="1206" y="462.90000000000003" font-size="13.55" fill="#585858">Gipsputz (10mm)</text><circle cx="1159.8" cy="510.2" r="1.5" fill="#333"/><path d="M1159.8,510.2 H1201.5" stroke="#666" stroke-width="0.9"/><text x="1206" y="514.8" font-size="13.55" fill="#585858">Isopaneele (PUR) (80mm)</text><circle cx="1159.8" cy="537.6" r="1.5" fill="#333"/><path d="M1159.8,537.6 H1201.5" stroke="#666" stroke-width="0.9"/><text x="1206" y="542.2" font-size="13.55" fill="#585858">Luftschicht (ruhend) (40mm)</text><circle cx="1159.8" cy="674.3" r="1.5" fill="#333"/><path d="M1159.8,674.3 H1201.5" stroke="#666" stroke-width="0.9"/><text x="1206" y="678.9" font-size="13.55" fill="#585858">Beton (200mm)</text><circle cx="1159.8" cy="708.3" r="1.5" fill="#333"/><path d="M1159.8,708.3 H1201.5" stroke="#666" stroke-width="0.9"/><text x="1206" y="712.9" font-size="13.55" fill="#585858">Zementestrich (50mm)</text><circle cx="444.2" cy="740" r="8" fill="none" stroke="#222" stroke-width="1.6"/><path d="M440,740 H448.4 M444.2,735.8 V741" stroke="#222" stroke-width="2"/></svg>
</body></html>
